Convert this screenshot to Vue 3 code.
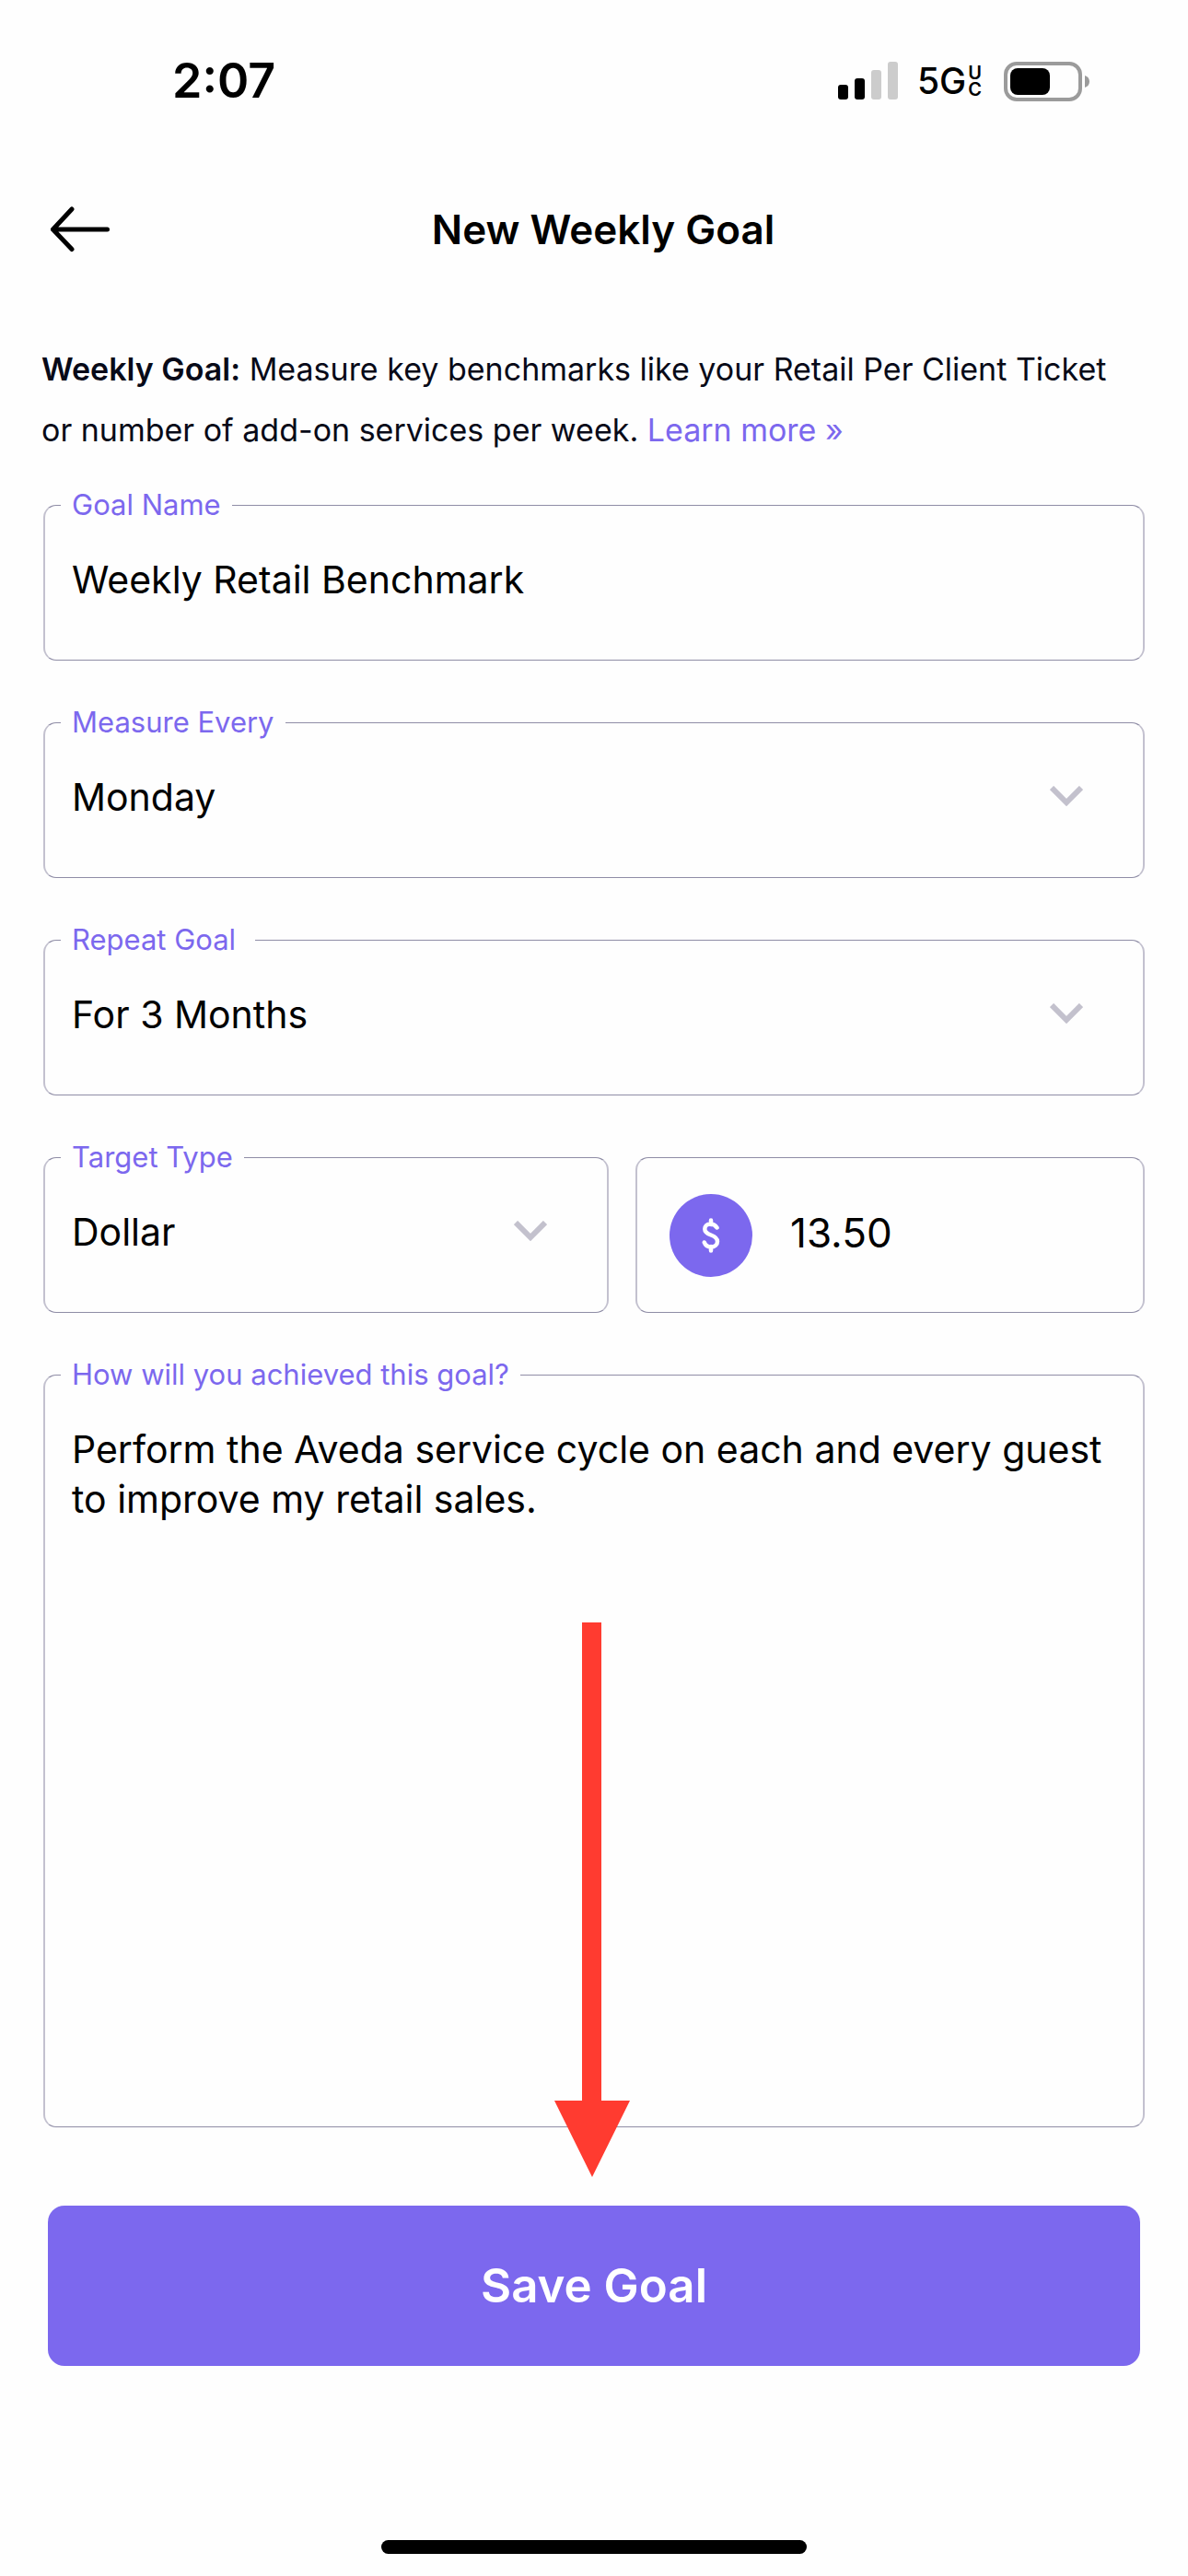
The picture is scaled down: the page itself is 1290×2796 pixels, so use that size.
<script setup>
import { ref } from 'vue'

const goalName = ref('Weekly Retail Benchmark')
const measureEvery = ref('Monday')
const repeatGoal = ref('For 3 Months')
const targetType = ref('Dollar')
const targetAmount = ref('13.50')
const plan = ref('Perform the Aveda service cycle on each and every guest to improve my retail sales.')
</script>

<template>
  <div class="screen">
    <div class="status-bar">
      <span class="time">2:07</span>
      <div class="indicators">
        <svg class="signal" width="65" height="42" viewBox="0 0 65 42" aria-hidden="true">
          <rect x="0" y="25" width="11" height="16" rx="3" />
          <rect x="18" y="18" width="11" height="23" rx="3" />
          <rect x="36" y="9" width="11" height="32" rx="3" fill="#ccc" />
          <rect x="54" y="0" width="11" height="41" rx="3" fill="#ccc" />
        </svg>
        <div class="network">
          <span>5G</span>
          <span class="network-tier"><span>U</span><span>C</span></span>
        </div>
        <svg class="battery" width="94" height="43" viewBox="0 0 94 43" aria-hidden="true">
          <rect x="2" y="2" width="81" height="39" rx="12" fill="none" stroke="#9b9b9b" stroke-width="4" />
          <rect x="7" y="7" width="43" height="29" rx="8" />
          <path d="M88 15c3 1 5 3 5 6.500s-2 5.500-5 6.500z" fill="#9b9b9b" />
        </svg>
      </div>
    </div>

    <header class="header">
      <button class="back" type="button" aria-label="Back">
        <svg width="66" height="50" viewBox="0 0 66 50" fill="none" stroke="#000" stroke-width="5" stroke-linecap="round" stroke-linejoin="round" aria-hidden="true">
          <path d="M62.500 25H3.500M24 3L3.500 25L24 46.500" />
        </svg>
      </button>
      <h1>New Weekly Goal</h1>
    </header>

    <p class="intro">
      <strong>Weekly Goal:</strong> Measure key benchmarks like your Retail Per Client Ticket
      or number of add-on services per week. <a href="#">Learn more »</a>
    </p>

    <form class="form" @submit.prevent>
      <fieldset class="field">
        <legend><label for="goal-name">Goal Name</label></legend>
        <div class="control">
          <input id="goal-name" v-model="goalName" type="text" />
        </div>
      </fieldset>

      <fieldset class="field">
        <legend><label for="measure-every">Measure Every</label></legend>
        <div class="control">
          <select id="measure-every" v-model="measureEvery">
            <option>Monday</option>
            <option>Friday</option>
          </select>
          <svg class="chevron" viewBox="0 0 36 22" aria-hidden="true"><path d="M2 2L18 18L34 2" /></svg>
        </div>
      </fieldset>

      <fieldset class="field">
        <legend><label for="repeat-goal">Repeat Goal&nbsp;</label></legend>
        <div class="control">
          <select id="repeat-goal" v-model="repeatGoal">
            <option>For 3 Months</option>
            <option>For 6 Months</option>
          </select>
          <svg class="chevron" viewBox="0 0 36 22" aria-hidden="true"><path d="M2 2L18 18L34 2" /></svg>
        </div>
      </fieldset>

      <div class="target">
        <fieldset class="field">
          <legend><label for="target-type">Target Type</label></legend>
          <div class="control">
            <select id="target-type" v-model="targetType">
              <option>Dollar</option>
              <option>Percent</option>
            </select>
            <svg class="chevron" viewBox="0 0 36 22" aria-hidden="true"><path d="M2 2L18 18L34 2" /></svg>
          </div>
        </fieldset>
        <div class="amount">
          <svg class="currency" width="90" height="90" viewBox="0 0 90 90" aria-hidden="true">
            <circle cx="45" cy="45" r="45" fill="#7c68ee" />
            <path d="M45 28.500V33M45 57V61.500M51.500 36.500C49.500 33.500 47.500 32.500 44.500 32.500C40.500 32.500 38.300 35 38.300 38C38.300 41.500 41 43 45 44.500C49 46 52 47.500 52 51.500C52 55 49 57.500 45 57.500C41.500 57.500 39 56 37.800 52.500" fill="none" stroke="#fff" stroke-width="4.500" stroke-linecap="round" stroke-linejoin="round" />
          </svg>
          <input v-model="targetAmount" type="text" inputmode="decimal" aria-label="Target amount" />
        </div>
      </div>

      <fieldset class="field field-plan">
        <legend><label for="plan">How will you achieved this goal?</label></legend>
        <div class="control">
          <textarea id="plan" v-model="plan"></textarea>
          <svg class="pointer" width="84" height="602" viewBox="0 0 84 602" aria-hidden="true">
            <path d="M31 0H52V519H83L42 602L1 519H31Z" fill="#ff3b30" />
          </svg>
        </div>
      </fieldset>

      <button class="save" type="submit">Save Goal</button>
    </form>

    <div class="home-indicator"></div>
  </div>
</template>

<style>
body {
  background: #fefefe;
}
</style>

<style scoped>
* {
  box-sizing: border-box;
}

.screen {
  display: flex;
  flex-direction: column;
  min-height: 100vh;
  padding-bottom: 24px;
  color: #000;
  font-family: Inter, "Liberation Sans", sans-serif;
}

.status-bar {
  display: flex;
  align-items: center;
  justify-content: space-between;
  height: 176px;
  padding: 0 106px 0 187px;
}

.time {
  font-size: 52px;
  font-weight: 600;
  line-height: 64px;
}

.indicators {
  display: flex;
  align-items: center;
}

.network {
  display: flex;
  align-items: center;
  gap: 2px;
  margin: 0 24px 0 21px;
  font-size: 39px;
  font-weight: 500;
  line-height: 42px;
}

.network-tier {
  display: flex;
  flex-direction: column;
  font-size: 20px;
  font-weight: 600;
  line-height: 18px;
}

.header {
  display: flex;
  align-items: center;
  height: 146px;
  padding: 0 110px 0 44px;
}

.back {
  display: flex;
  padding: 10px;
  border: 0;
  background: none;
}

h1 {
  flex: 1;
  margin: 0;
  font-size: 44px;
  font-weight: 600;
  line-height: 60px;
  text-align: center;
}

.intro {
  margin: 46px 60px 0 45px;
  color: #080a18;
  font-size: 34px;
  line-height: 66px;
}

.intro strong {
  font-weight: 600;
}

.intro a {
  color: #7c68ee;
  text-decoration: none;
}

.form {
  display: flex;
  flex-direction: column;
  gap: 47px;
  padding: 28px 47px 0;
}

.field {
  min-width: 0;
  margin: 0;
  padding: 0 0 0 17px;
  border: solid;
  border-width: 1px 2px;
  border-color: #8f8da6 #c3c1cf;
  border-radius: 14px;
}

legend {
  padding: 0 12px 2px 12px;
  color: #7c68ee;
  font-size: 31px;
  line-height: 39px;
}

legend label {
  display: block;
}

.control {
  position: relative;
  display: flex;
}

input,
select,
textarea {
  display: block;
  width: 100%;
  min-width: 0;
  margin: 0;
  border: 0;
  outline: 0;
  appearance: none;
  background: none;
  color: #000;
  font: 41px/54px Inter, "Liberation Sans", sans-serif;
}

.control input,
.control select {
  height: 147px;
  padding: 33px 12px 60px;
}

.chevron {
  position: absolute;
  top: 48px;
  right: 65px;
  width: 36px;
  height: 22px;
  fill: none;
  stroke: #c3c1cd;
  stroke-width: 6;
  pointer-events: none;
}

.target {
  display: grid;
  grid-template-columns: 614fr 553fr;
  align-items: end;
  gap: 29px;
}

.amount {
  display: flex;
  align-items: center;
  gap: 41px;
  height: 169px;
  padding: 0 35px;
  border: solid;
  border-width: 1px 2px;
  border-color: #8f8da6 #c3c1cf;
  border-radius: 14px;
}

.amount input {
  padding: 0 0 6px;
  font-size: 44px;
}

.currency {
  flex: none;
}

textarea {
  height: 795px;
  padding: 33px 12px 12px;
  resize: none;
}

.pointer {
  position: absolute;
  bottom: -55px;
  left: calc(50% - 53px);
  pointer-events: none;
}

.save {
  height: 174px;
  margin: 38px 5px 0;
  border: 0;
  border-radius: 18px;
  background: #7c68ee;
  color: #fff;
  font: 600 51px/64px Inter, "Liberation Sans", sans-serif;
}

.home-indicator {
  width: 462px;
  height: 15px;
  margin: auto auto 0;
  border-radius: 8px;
  background: #000;
}
</style>
